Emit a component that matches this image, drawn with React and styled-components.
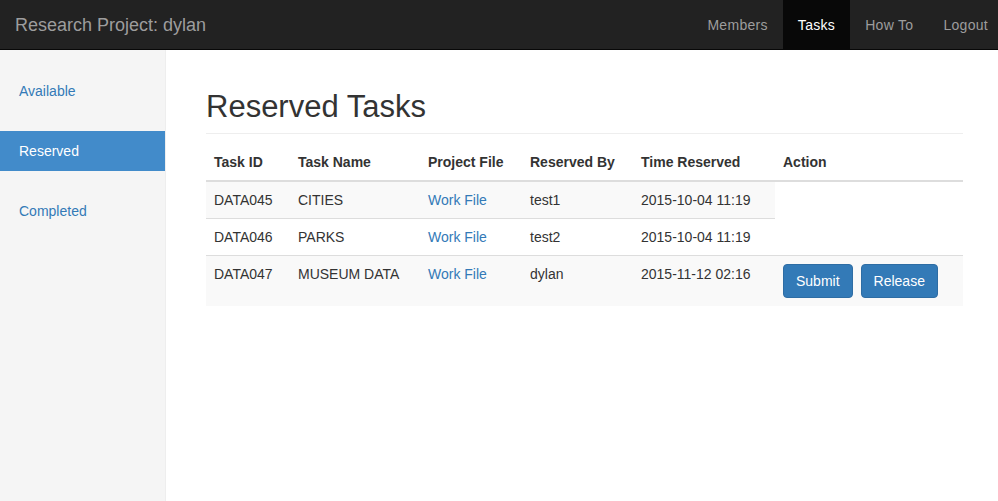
import React from "react";
import styled, { createGlobalStyle } from "styled-components";

const Global = createGlobalStyle`
  html, body { margin: 0; padding: 0; overflow: hidden; }
  body {
    font-family: "Liberation Sans", Arial, sans-serif;
    font-size: 14px;
    line-height: 1.42857;
    color: #333;
    background: #fff;
  }
  * { box-sizing: border-box; }
`;

const Page = styled.div`
  width: 1003px;
  height: 501px;
  display: grid;
  grid-template-rows: 50px 1fr;
`;

const Navbar = styled.nav`
  background: #222;
  border-bottom: 1px solid #080808;
  display: flex;
  justify-content: space-between;
  align-items: stretch;
  padding: 0 0 0 15px;
`;

const Brand = styled.a`
  font-size: 18px;
  line-height: 20px;
  color: #9d9d9d;
  padding: 15px 0;
  text-decoration: none;
`;

const NavList = styled.ul`
  list-style: none;
  margin: 0;
  padding: 0;
  display: flex;
`;

const NavLink = styled.a`
  display: block;
  padding: 15px;
  height: 49px;
  line-height: 20px;
  letter-spacing: 0.3px;
  color: ${(p) => (p.$active ? "#fff" : "#9d9d9d")};
  background: ${(p) => (p.$active ? "#080808" : "transparent")};
  text-decoration: none;
`;

const Body = styled.div`
  display: grid;
  grid-template-columns: 166px 1fr;
`;

const Sidebar = styled.aside`
  background: #f5f5f5;
  border-right: 1px solid #eee;
  padding-top: 21px;
`;

const SideList = styled.ul`
  list-style: none;
  margin: 0 0 20px 0;
  padding: 0;
`;

const SideLink = styled.a`
  display: block;
  padding: 10px 19px;
  line-height: 20px;
  color: ${(p) => (p.$active ? "#fff" : "#337ab7")};
  background: ${(p) => (p.$active ? "#428bca" : "transparent")};
  text-decoration: none;
`;

const Main = styled.main`
  padding: 40px 40px 0;
`;

const Header = styled.h1`
  font-size: 31px;
  font-weight: 500;
  line-height: 34px;
  margin: 0 0 10px;
  padding-bottom: 9px;
  border-bottom: 1px solid #eee;
  color: #333;
`;

const Table = styled.table`
  width: 100%;
  border-collapse: collapse;
  border-spacing: 0;
`;

const Th = styled.th`
  text-align: left;
  font-weight: bold;
  padding: 8px;
  line-height: 20px;
  vertical-align: bottom;
  border-bottom: 2px solid #ddd;
  width: ${(p) => p.$w || "auto"};
`;

const Td = styled.td`
  padding: 8px;
  line-height: 20px;
  vertical-align: top;
  border-top: ${(p) => (p.$first ? "none" : "1px solid #ddd")};
  background: ${(p) => (p.$striped ? "#f9f9f9" : "transparent")};
`;

const Link = styled.a`
  color: #337ab7;
  text-decoration: none;
`;

const Btn = styled.button`
  font-family: inherit;
  font-size: 14px;
  line-height: 20px;
  padding: 6px 12px;
  color: #fff;
  background: #337ab7;
  border: 1px solid #2e6da4;
  border-radius: 4px;
  margin-right: 8px;
  cursor: pointer;
`;

const rows = [
  { id: "DATA045", name: "CITIES", by: "test1", time: "2015-10-04 11:19" },
  { id: "DATA046", name: "PARKS", by: "test2", time: "2015-10-04 11:19" },
  { id: "DATA047", name: "MUSEUM DATA", by: "dylan", time: "2015-11-12 02:16", actions: true },
];

export default function App() {
  return (
    <>
      <Global />
      <Page>
        <Navbar>
          <Brand href="#">Research Project: dylan</Brand>
          <NavList>
            <li><NavLink href="#">Members</NavLink></li>
            <li><NavLink href="#" $active>Tasks</NavLink></li>
            <li><NavLink href="#">How To</NavLink></li>
            <li><NavLink href="#">Logout</NavLink></li>
          </NavList>
        </Navbar>
        <Body>
          <Sidebar>
            <SideList><li><SideLink href="#">Available</SideLink></li></SideList>
            <SideList><li><SideLink href="#" $active>Reserved</SideLink></li></SideList>
            <SideList><li><SideLink href="#">Completed</SideLink></li></SideList>
          </Sidebar>
          <Main>
            <Header>Reserved Tasks</Header>
            <Table>
              <thead>
                <tr>
                  <Th $w="84px">Task ID</Th>
                  <Th $w="130px">Task Name</Th>
                  <Th $w="102px">Project File</Th>
                  <Th $w="111px">Reserved By</Th>
                  <Th $w="142px">Time Reserved</Th>
                  <Th>Action</Th>
                </tr>
              </thead>
              <tbody>
                {rows.map((r, i) => {
                  const striped = i % 2 === 0;
                  const first = i === 0;
                  return (
                    <tr key={r.id}>
                      <Td $first={first} $striped={striped}>{r.id}</Td>
                      <Td $first={first} $striped={striped}>{r.name}</Td>
                      <Td $first={first} $striped={striped}><Link href="#">Work File</Link></Td>
                      <Td $first={first} $striped={striped}>{r.by}</Td>
                      <Td $first={first} $striped={striped}>{r.time}</Td>
                      {r.actions && (
                        <Td $first={first} $striped={striped}>
                          <Btn>Submit</Btn>
                          <Btn>Release</Btn>
                        </Td>
                      )}
                    </tr>
                  );
                })}
              </tbody>
            </Table>
          </Main>
        </Body>
      </Page>
    </>
  );
}
